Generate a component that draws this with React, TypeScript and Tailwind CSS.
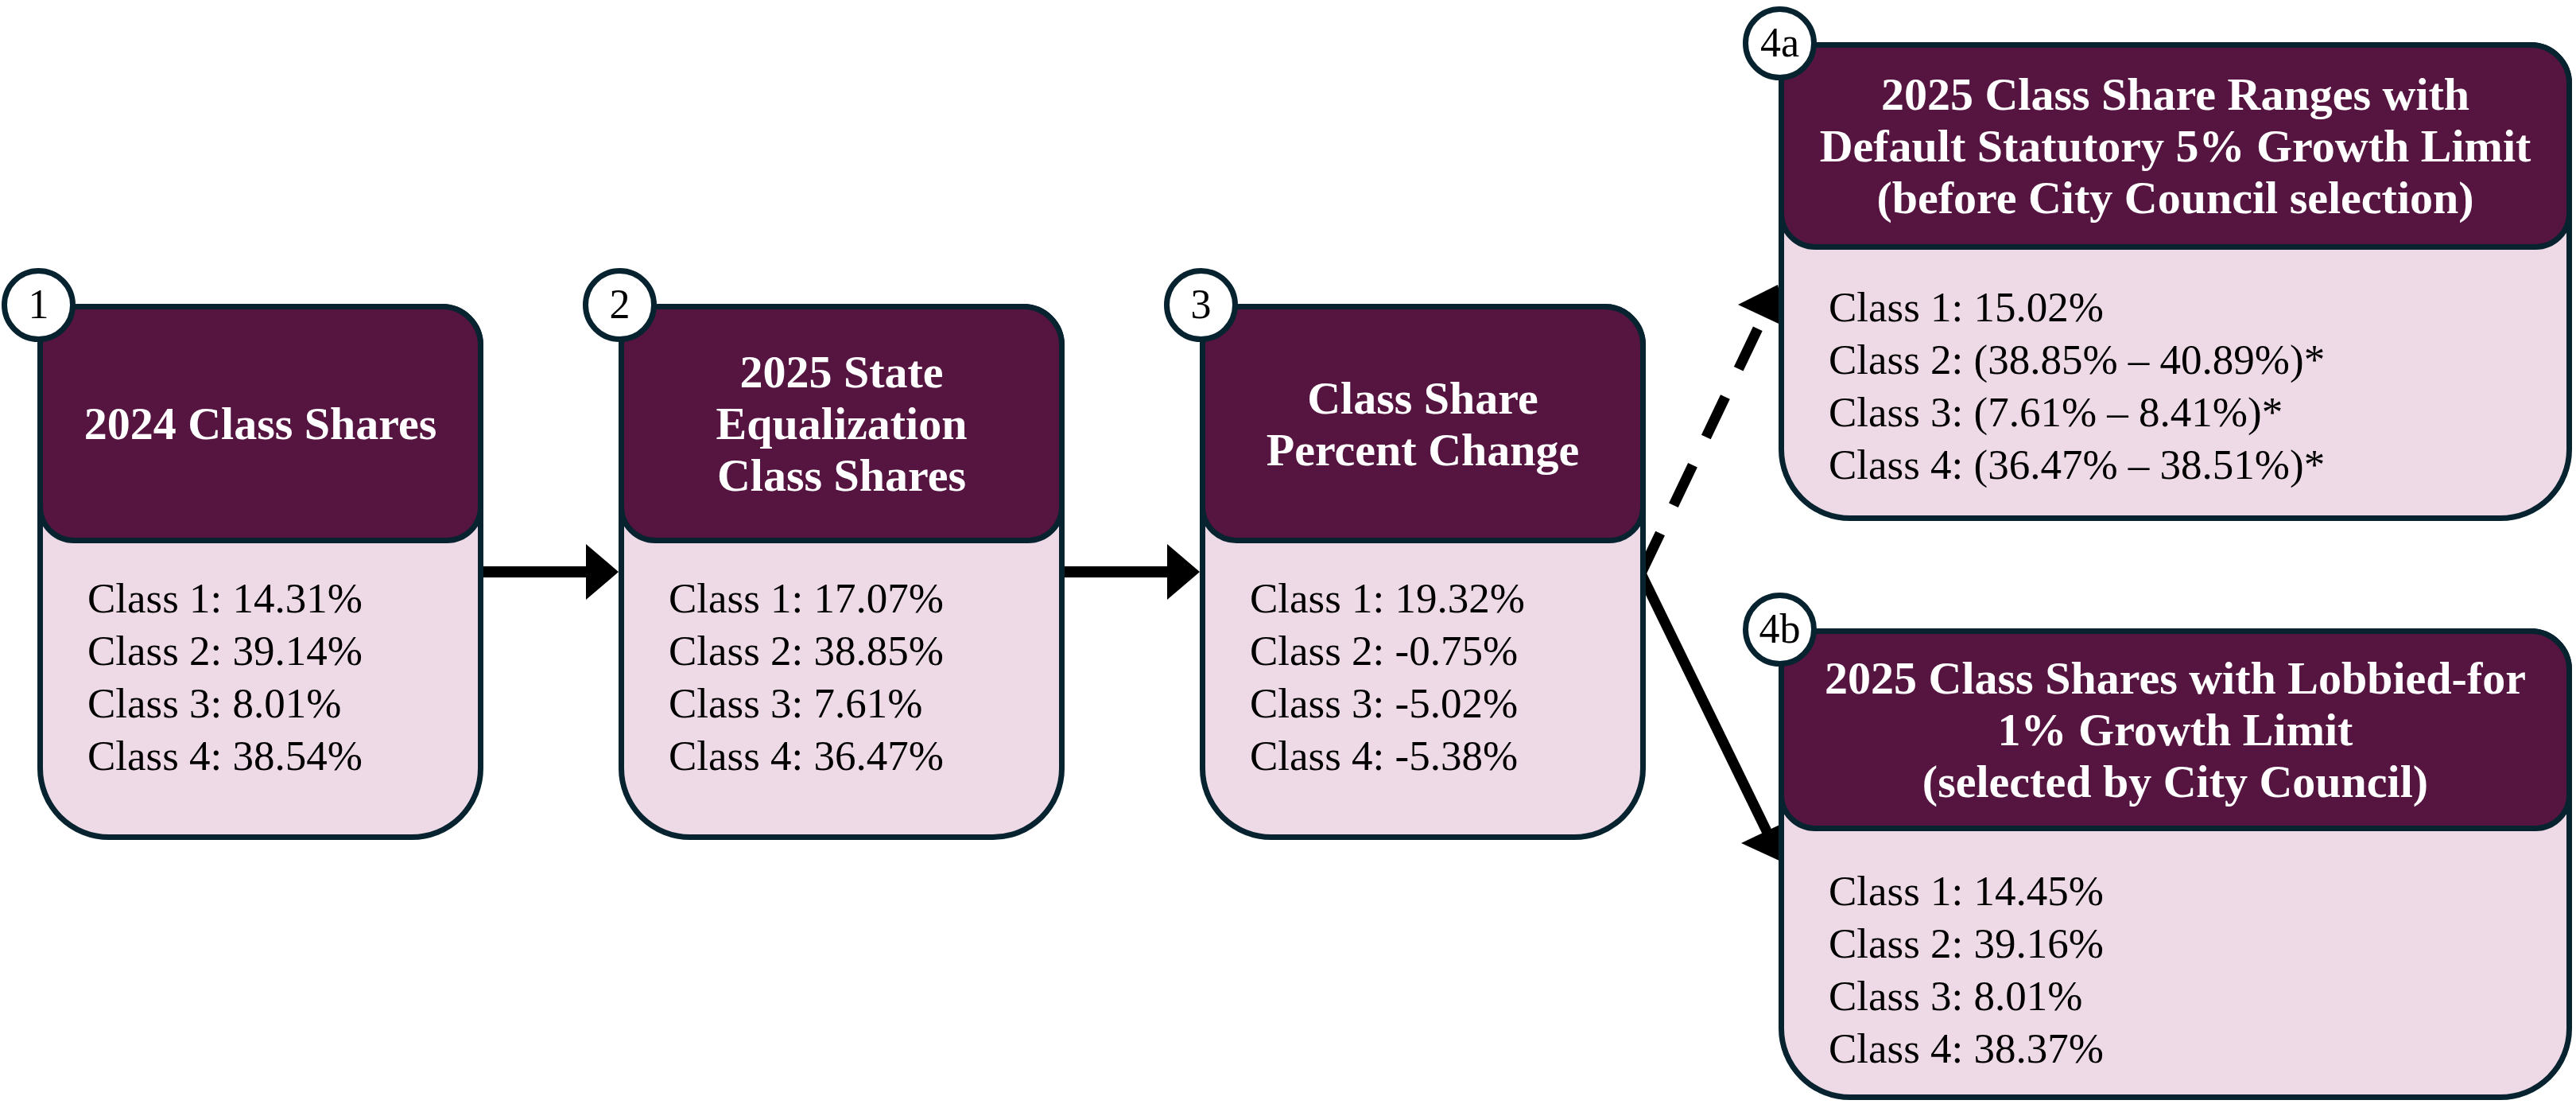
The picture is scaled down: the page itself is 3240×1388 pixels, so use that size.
import React from "react";

type CardProps = {
  num: string;
  title: string[];
  lines: string[];
  className: string;
  headerClass: string;
  bodyClass: string;
};

function Card({ num, title, lines, className, headerClass, bodyClass }: CardProps) {
  return (
    <div
      className={`relative flex flex-col rounded-t-[52px] rounded-b-[90px] border-[7px] border-[#072330] bg-[#eedae6] ${className}`}
    >
      {/* step badge sits on the top-left corner */}
      <div className="absolute -left-[52px] -top-[52px] z-20 flex h-[93px] w-[93px] items-center justify-center rounded-full border-[7px] border-[#072330] bg-white text-[52px] leading-none text-black">
        <span className="-mt-[2px]">{num}</span>
      </div>

      <div
        className={`relative z-10 -mx-[7px] -mt-[7px] flex flex-col items-center justify-center rounded-t-[52px] rounded-b-[46px] border-[7px] border-[#072330] bg-[#561540] text-center text-[58px] font-bold leading-[65px] text-white ${headerClass}`}
      >
        {title.map((t) => (
          <div key={t} className="whitespace-nowrap">
            {t}
          </div>
        ))}
      </div>

      <div
        className={`flex flex-1 flex-col justify-center pl-[56px] text-[53px] leading-[66px] text-black ${bodyClass}`}
      >
        {lines.map((l) => (
          <div key={l} className="whitespace-nowrap">
            {l}
          </div>
        ))}
      </div>
    </div>
  );
}

function Arrow() {
  return (
    <div className="flex w-[170px] shrink-0 items-center">
      <svg width="170" height="70" viewBox="0 0 170 70">
        <line x1="0" y1="35" x2="132" y2="35" stroke="#000" strokeWidth="14" />
        <polygon points="129,0 170,35 129,70" fill="#000" />
      </svg>
    </div>
  );
}

function Branches() {
  return (
    <svg
      width="167"
      height="1388"
      viewBox="2070 0 167 1388"
      className="shrink-0 overflow-visible"
    >
      {/* dashed branch up to 4a */}
      <line
        x1="2064"
        y1="721"
        x2="2220"
        y2="394"
        stroke="#000"
        strokeWidth="13"
        strokeDasharray="56 39"
      />
      <polygon points="2236,358 2250,413 2186,383" fill="#000" />
      {/* solid branch down to 4b */}
      <line x1="2064" y1="721" x2="2224" y2="1049" stroke="#000" strokeWidth="13" />
      <polygon points="2240,1083 2253,1030 2190,1060" fill="#000" />
    </svg>
  );
}

export default function App() {
  return (
    <div className="h-[1388px] w-[3240px] overflow-hidden bg-white font-['Liberation_Serif','Times_New_Roman',serif]">
      <div className="flex items-start pl-[47px]">
        <div className="mt-[382px] flex items-center">
          <Card
            num="1"
            title={["2024 Class Shares"]}
            lines={["Class 1: 14.31%", "Class 2: 39.14%", "Class 3: 8.01%", "Class 4: 38.54%"]}
            className="h-[674px] w-[561px]"
            headerClass="h-[301px]"
            bodyClass="pb-[30px]"
          />
          <Arrow />
          <Card
            num="2"
            title={["2025 State", "Equalization", "Class Shares"]}
            lines={["Class 1: 17.07%", "Class 2: 38.85%", "Class 3: 7.61%", "Class 4: 36.47%"]}
            className="h-[674px] w-[561px]"
            headerClass="h-[301px]"
            bodyClass="pb-[30px]"
          />
          <Arrow />
          <Card
            num="3"
            title={["Class Share", "Percent Change"]}
            lines={["Class 1: 19.32%", "Class 2: -0.75%", "Class 3: -5.02%", "Class 4: -5.38%"]}
            className="h-[674px] w-[561px]"
            headerClass="h-[301px]"
            bodyClass="pb-[30px]"
          />
        </div>

        <Branches />

        <div className="mt-[53px] flex w-[998px] flex-col gap-[135px]">
          <Card
            num="4a"
            title={[
              "2025 Class Share Ranges with",
              "Default Statutory 5% Growth Limit",
              "(before City Council selection)",
            ]}
            lines={[
              "Class 1: 15.02%",
              "Class 2: (38.85% \u2013 40.89%)*",
              "Class 3: (7.61% \u2013 8.41%)*",
              "Class 4: (36.47% \u2013 38.51%)*",
            ]}
            className="h-[602px] w-[998px]"
            headerClass="h-[261px]"
            bodyClass="pt-[8px]"
          />
          <Card
            num="4b"
            title={[
              "2025 Class Shares with Lobbied-for",
              "1% Growth Limit",
              "(selected by City Council)",
            ]}
            lines={["Class 1: 14.45%", "Class 2: 39.16%", "Class 3: 8.01%", "Class 4: 38.37%"]}
            className="h-[593px] w-[998px]"
            headerClass="h-[255px]"
            bodyClass="pt-[16px]"
          />
        </div>
      </div>
    </div>
  );
}
